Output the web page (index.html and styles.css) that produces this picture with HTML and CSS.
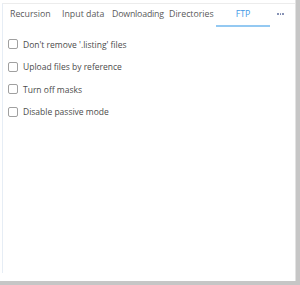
FILE: index.html
```html
<!DOCTYPE html>
<html lang="en">
<head>
  <meta charset="UTF-8">
  <title>FTP settings</title>
  <link rel="stylesheet" href="styles.css">
</head>
<body>
  <div class="panel">
    <div class="content">
      <div class="tabs">
        <div class="tab tab-recursion">Recursion</div>
        <div class="tab tab-input">Input data</div>
        <div class="tab tab-downloading">Downloading</div>
        <div class="tab tab-directories">Directories</div>
        <div class="tab tab-ftp active">FTP</div>
        <div class="tab tab-more"><span class="dot"></span><span class="dot"></span><span class="dot"></span></div>
      </div>

      <div class="options">
        <label class="option"><span class="box"></span>Don't remove '.listing' files</label>
        <label class="option"><span class="box"></span>Upload files by reference</label>
        <label class="option"><span class="box"></span>Turn off masks</label>
        <label class="option"><span class="box"></span>Disable passive mode</label>
      </div>
    </div>
  </div>
</body>
</html>
```

FILE: styles.css
```css
* {
  margin: 0;
  padding: 0;
  box-sizing: border-box;
}

body {
  font-family: 'Open Sans', 'Noto Sans', sans-serif;
  background: #c6c6c6;
  width: 300px;
  height: 285px;
  overflow: hidden;
}

.panel {
  width: 296px;
  height: 281px;
  background: #fff;
  border-right: 1px solid #e2e2e2;
  padding-top: 3px;
}

.content {
  width: 293px;
  height: 270px;
  border-top: 1px solid #ececec;
  margin-left: 2px;
  border-left: 1px solid #e6edf5;
}

.tabs {
  display: flex;
  align-items: flex-end;
  height: 23px;
  font-size: 8.8px;
  color: #5a5a5a;
}

.tab {
  height: 23px;
  line-height: 20px;
  white-space: nowrap;
  overflow: hidden;
}

.tab-recursion { margin-left: 7px; width: 52px; }
.tab-input { width: 50px; }
.tab-downloading { width: 57px; letter-spacing: -0.2px; }
.tab-directories { width: 47px; }

.tab.active {
  color: #3f9ae6;
  width: 54px;
  text-align: center;
  border-bottom: 2px solid #94c9f2;
}

.tab-more {
  margin-left: 7px;
  display: flex;
  align-items: center;
  gap: 1px;
  height: 20px;
  margin-bottom: 3px;
}

.dot {
  width: 1.6px;
  height: 1.6px;
  border-radius: 50%;
  background: #6f7ca6;
}

.options {
  padding: 12px 0 0 5px;
  display: flex;
  flex-direction: column;
  gap: 12.6px;
}

.option {
  display: flex;
  align-items: center;
  height: 10px;
  font-size: 8.5px;
  color: #4c4c4c;
}

.box {
  width: 10px;
  height: 10px;
  border: 1px solid #a0a0a0;
  border-radius: 2px;
  margin-right: 5px;
}
```
